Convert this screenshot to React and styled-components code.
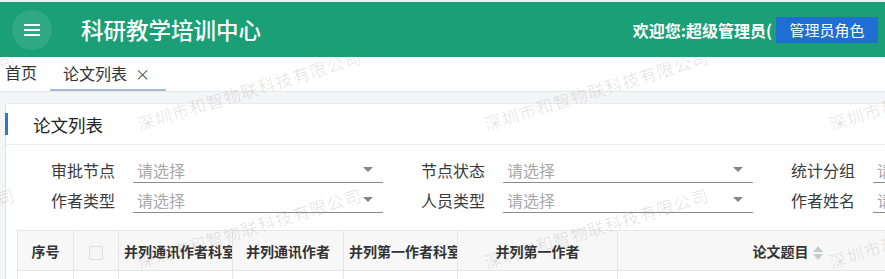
import React from "react";
import styled, { createGlobalStyle } from "styled-components";

const Global = createGlobalStyle`
  html, body { margin: 0; padding: 0; background: #ffffff; }
  body { font-family: "Noto Sans CJK SC", "Noto Sans", sans-serif; color: #333; }
  * { box-sizing: border-box; }
`;

const Page = styled.div`
  position: relative;
  width: 885px;
  height: 279px;
  overflow: hidden;
  background: #fff;
`;

const Header = styled.header`
  display: flex;
  align-items: center;
  height: 57px;
  border-top: 2px solid #e6f4ee;
  background: #1a9f76;
  padding: 0 7px 0 12px;
  color: #fff;
`;

const MenuButton = styled.div`
  width: 40px;
  height: 40px;
  border-radius: 50%;
  background: rgba(255, 255, 255, 0.1);
  display: flex;
  align-items: center;
  justify-content: center;
`;

const Title = styled.h1`
  margin: 0 0 0 29px;
  font-size: 22.5px;
  font-weight: 500;
  letter-spacing: 0;
  line-height: 1;
`;

const Spacer = styled.div`
  flex: 1;
`;

const Welcome = styled.span`
  font-size: 16px;
  font-weight: 700;
  margin-right: 4px;
`;

const RoleButton = styled.button`
  height: 26px;
  width: 102px;
  border: none;
  background: #1f6fd2;
  color: #fff;
  font-family: inherit;
  font-size: 15px;
  padding: 0;
`;

const TabBar = styled.nav`
  display: flex;
  align-items: stretch;
  height: 35px;
  border-bottom: 1px solid #e6e6e6;
  padding-left: 5px;
`;

const Tab = styled.div`
  display: flex;
  align-items: center;
  font-size: 16px;
  color: #333;
  padding: ${(p) => (p.$active ? "0 16px 0 13px" : "0")};
  margin-left: ${(p) => (p.$active ? "13px" : "0")};
  border-bottom: 2px solid ${(p) => (p.$active ? "#a5bad6" : "transparent")};
  margin-bottom: ${(p) => (p.$active ? "0" : "2px")};
`;

const Close = styled.span`
  margin-left: 8px;
  font-size: 15px;
  color: #555;
`;

const Content = styled.main`
  background: #f4f5f7;
  padding: 11px 0 0 5px;
  height: 100%;
`;

const Card = styled.section`
  background: #fff;
  border-left: 1px solid #e3e3e3;
  border-top: 1px solid #ececec;
`;

const CardHeader = styled.div`
  display: flex;
  align-items: center;
  height: 41px;
  border-bottom: 1px solid #ececec;
`;

const Marker = styled.span`
  width: 3px;
  height: 22px;
  margin-left: -1px;
  background: #2a7cc2;
`;

const CardTitle = styled.h2`
  margin: 0 0 0 25px;
  font-size: 17.5px;
  font-weight: 400;
  color: #222;
`;

const Filters = styled.div`
  padding: 12px 0 13px 19px;
  display: flex;
  flex-direction: column;
`;

const FilterRow = styled.div`
  display: flex;
  height: 30px;
  white-space: nowrap;
`;

const Group = styled.div`
  display: flex;
  flex: none;
  height: 26px;
  align-items: center;
  margin-right: 12px;
`;

const Label = styled.label`
  width: 90px;
  text-align: right;
  font-size: 16px;
  color: #3a3a3a;
  margin-right: 18px;
`;

const Select = styled.div`
  width: 250px;
  height: 26px;
  border-bottom: 1px solid #8c8c8c;
  display: flex;
  align-items: center;
  justify-content: space-between;
  padding: 0 10px 0 4px;
  font-size: 16px;
  color: #a8a8a8;
`;

const Caret = styled.span`
  width: 0;
  height: 0;
  border-left: 5px solid transparent;
  border-right: 5px solid transparent;
  border-top: 5px solid #858585;
`;

const TableWrap = styled.div`
  margin-left: 11px;
`;

const Table = styled.table`
  border-collapse: collapse;
  table-layout: fixed;
  width: 940px;
`;

const Th = styled.th`
  height: 40px;
  background: #f7f7f8;
  border: 1px solid #e6e6e6;
  font-size: 14px;
  font-weight: 600;
  color: #333;
  padding: 0 5px;
  text-align: ${(p) => (p.$left ? "left" : "center")};
  white-space: nowrap;
  overflow: hidden;
  text-overflow: clip;
`;

const Td = styled.td`
  height: 40px;
  border: 1px solid #e6e6e6;
`;

const CheckBox = styled.span`
  display: inline-block;
  width: 14px;
  height: 14px;
  border: 1px solid #dcdcdc;
  background: #f6f6f6;
  border-radius: 2px;
  vertical-align: middle;
`;

const SortIcon = styled.span`
  display: inline-flex;
  flex-direction: column;
  gap: 2px;
  margin-left: 4px;
  vertical-align: middle;
  &::before, &::after {
    content: "";
    width: 0;
    height: 0;
    border-left: 5px solid transparent;
    border-right: 5px solid transparent;
  }
  &::before { border-bottom: 6px solid #c6c9ce; }
  &::after { border-top: 6px solid #c6c9ce; }
`;

const Watermarks = styled.div`
  position: absolute;
  inset: 0;
  pointer-events: none;
`;

const Mark = styled.span`
  position: absolute;
  font-size: 17px;
  line-height: 17px;
  letter-spacing: 1px;
  font-weight: 300;
  white-space: nowrap;
  color: rgba(120, 120, 120, 0.24);
  transform-origin: 0 100%;
  transform: rotate(-17deg);
`;

const cols = [56, 45, 114, 111, 114, 160, 340];

const filterRows = [
  ["审批节点", "节点状态", "统计分组"],
  ["作者类型", "人员类型", "作者姓名"],
];

const marks = [];
[-6, 132, 270].forEach((y) => {
  [-207, 140, 487, 832].forEach((x) => marks.push({ x, y }));
});

export default function App() {
  return (
    <>
      <Global />
      <Page>
        <Header>
          <MenuButton>
            <svg width="16" height="12" viewBox="0 0 16 12">
              <rect x="0" y="0" width="16" height="2" fill="#fff" />
              <rect x="0" y="5" width="16" height="2" fill="#fff" />
              <rect x="0" y="10" width="16" height="2" fill="#fff" />
            </svg>
          </MenuButton>
          <Title>科研教学培训中心</Title>
          <Spacer />
          <Welcome>欢迎您:超级管理员(</Welcome>
          <RoleButton>管理员角色</RoleButton>
        </Header>
        <TabBar>
          <Tab>首页</Tab>
          <Tab $active>
            论文列表<Close>×</Close>
          </Tab>
        </TabBar>
        <Content>
          <Card>
            <CardHeader>
              <Marker />
              <CardTitle>论文列表</CardTitle>
            </CardHeader>
            <Filters>
              {filterRows.map((row, i) => (
                <FilterRow key={i}>
                  {row.map((label) => (
                    <Group key={label}>
                      <Label>{label}</Label>
                      <Select>
                        <span>请选择</span>
                        <Caret />
                      </Select>
                    </Group>
                  ))}
                </FilterRow>
              ))}
            </Filters>
            <TableWrap>
              <Table>
                <colgroup>
                  {cols.map((w, i) => (
                    <col key={i} style={{ width: w }} />
                  ))}
                </colgroup>
                <thead>
                  <tr>
                    <Th>序号</Th>
                    <Th>
                      <CheckBox />
                    </Th>
                    <Th $left>并列通讯作者科室</Th>
                    <Th>并列通讯作者</Th>
                    <Th $left>并列第一作者科室</Th>
                    <Th>并列第一作者</Th>
                    <Th>
                      论文题目
                      <SortIcon />
                    </Th>
                  </tr>
                </thead>
                <tbody>
                  <tr>
                    {cols.map((_, i) => (
                      <Td key={i} />
                    ))}
                  </tr>
                </tbody>
              </Table>
            </TableWrap>
          </Card>
        </Content>
        <Watermarks>
          {marks.map((m, i) => (
            <Mark key={i} style={{ left: m.x, top: m.y - 17 }}>
              深圳市和智物联科技有限公司
            </Mark>
          ))}
        </Watermarks>
      </Page>
    </>
  );
}
